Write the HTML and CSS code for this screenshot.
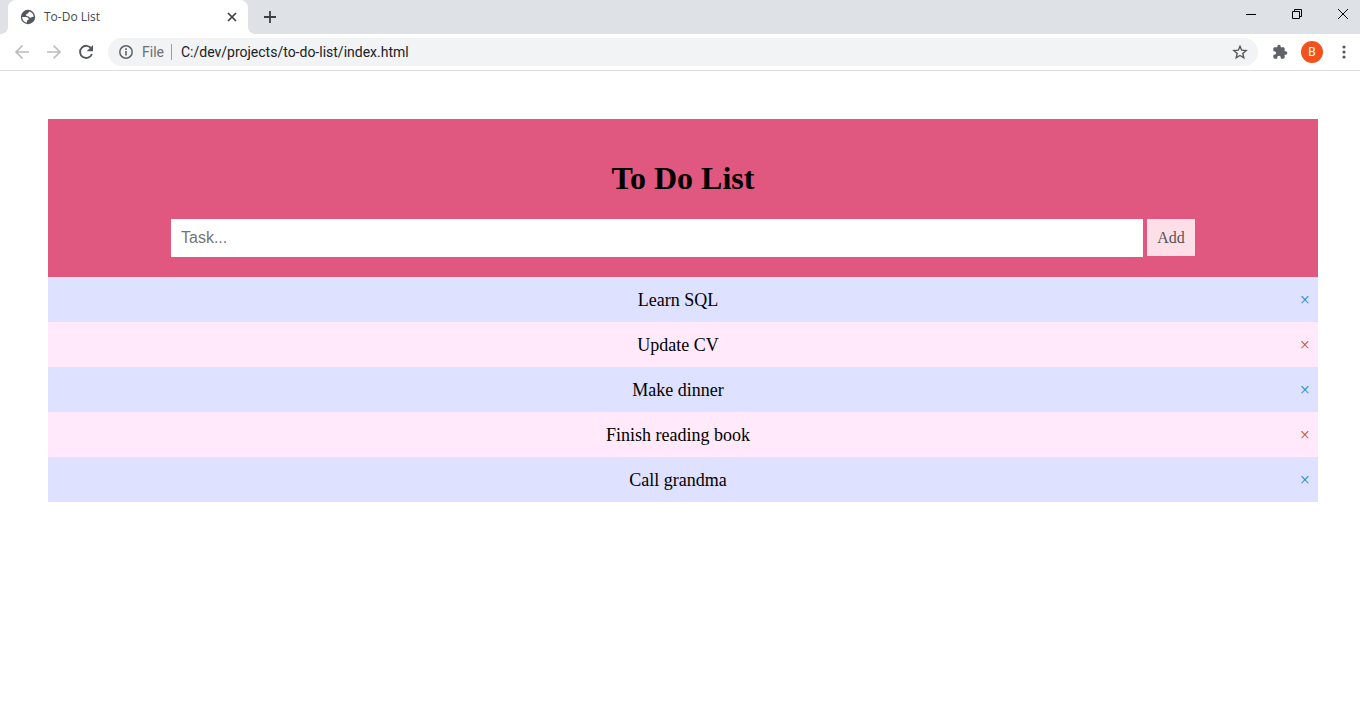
FILE: index.html
```html
<!DOCTYPE html>
<html lang="en">
<head>
<meta charset="utf-8">
<title>To-Do List</title>
<link rel="stylesheet" href="styles.css">
</head>
<body>
<header class="browser">
  <div class="tabstrip">
    <div class="tab">
      <svg class="tab-icon" viewBox="0 0 16 16" aria-hidden="true"><circle cx="8" cy="8" r="7.200" fill="#54585d"/><path d="M9.300 2.400C8.500 3 8.700 3.500 8 4.200 7.200 4.900 6 4.900 6 6c0 1 .9 1.300 2 1.300 1.200 0 1 1.500 2.300 1.500 1.500 0 1.300-1.300 3.400-.9C13.700 5 12 3 9.300 2.400z" fill="#fff"/><path d="M2.200 8h3.600c1.600 0 2.900.7 2.900 2 0 1-.6 1.400-1.700 1.500v2.100C4.200 13.300 2.100 11 2.200 8z" fill="#fff"/></svg>
      <span class="tab-title">To-Do List</span>
      <button class="icon-button tab-close" aria-label="Close tab"><svg width="10" height="10" viewBox="0 0 10 10"><path d="M1 1l8 8M9 1L1 9" stroke="#3c4043" stroke-width="1.700"/></svg></button>
    </div>
    <button class="icon-button new-tab" aria-label="New tab"><svg width="12" height="12" viewBox="0 0 12 12"><path d="M6 0v12M0 6h12" stroke="#3c4043" stroke-width="1.800"/></svg></button>
    <div class="window-controls">
      <button class="icon-button window-button" aria-label="Minimize"><svg width="10" height="10" viewBox="0 0 10 10"><path d="M0 5.500h10" stroke="#000"/></svg></button>
      <button class="icon-button window-button" aria-label="Restore"><svg width="10" height="10" viewBox="0 0 10 10"><path d="M.5 2.500h7v7h-7zM2.500 2.500v-2h7v7h-2" fill="none" stroke="#000"/></svg></button>
      <button class="icon-button window-button window-close" aria-label="Close"><svg width="10" height="10" viewBox="0 0 10 10"><path d="M0 0l10 10M10 0L0 10" stroke="#000"/></svg></button>
    </div>
  </div>
  <div class="toolbar">
    <nav class="nav-buttons">
      <button class="icon-button nav-button" aria-label="Back"><svg width="16" height="16" viewBox="0 0 16 16"><path d="M15 8H2M8.500 1.500L2 8l6.500 6.500" fill="none" stroke="#babcbe" stroke-width="1.700"/></svg></button>
      <button class="icon-button nav-button" aria-label="Forward"><svg width="16" height="16" viewBox="0 0 16 16"><path d="M1 8h13M7.500 1.500L14 8l-6.500 6.500" fill="none" stroke="#babcbe" stroke-width="1.700"/></svg></button>
      <button class="icon-button nav-button" aria-label="Reload"><svg width="16" height="16" viewBox="0 0 16 16"><path d="M13.300 4.600A6.100 6.100 0 1 0 13.900 10" fill="none" stroke="#54585d" stroke-width="1.900"/><path d="M15 1v6.300H8.700z" fill="#54585d"/></svg></button>
    </nav>
    <div class="address-bar">
      <svg class="info-icon" width="14" height="14" viewBox="0 0 14 14" aria-hidden="true"><circle cx="7" cy="7" r="6.200" fill="none" stroke="#5f6368" stroke-width="1.500"/><path d="M7 6v4.500M7 3.300v1.700" stroke="#5f6368" stroke-width="1.600"/></svg>
      <span class="scheme">File</span>
      <input class="url" type="text" aria-label="Address" value="C:/dev/projects/to-do-list/index.html">
      <button class="icon-button" aria-label="Bookmark"><svg width="16" height="16" viewBox="0 0 16 16"><path d="M8 2.200l1.700 4 4.400.4-3.300 2.900 1 4.300L8 11.500l-3.800 2.300 1-4.300-3.300-2.900 4.400-.4z" fill="none" stroke="#54585d" stroke-width="1.400"/></svg></button>
    </div>
    <button class="icon-button extensions" aria-label="Extensions"><svg width="16" height="16" viewBox="0 0 24 24"><path d="M20.500 11H19V7c0-1.100-.9-2-2-2h-4V3.500a2.500 2.500 0 0 0-5 0V5H4c-1.100 0-2 .9-2 2v3.800h1.500a2.700 2.700 0 0 1 0 5.400H2V20c0 1.100.9 2 2 2h3.800v-1.500a2.700 2.700 0 0 1 5.400 0V22H17c1.100 0 2-.9 2-2v-4h1.500a2.500 2.500 0 0 0 0-5z" fill="#5f6368"/></svg></button>
    <button class="icon-button avatar" aria-label="Profile">B</button>
    <button class="icon-button menu" aria-label="Menu"><svg width="4" height="14" viewBox="0 0 4 14"><g fill="#54585d"><circle cx="2" cy="2" r="1.600"/><circle cx="2" cy="7" r="1.600"/><circle cx="2" cy="12" r="1.600"/></g></svg></button>
  </div>
</header>
<main class="page">
  <section class="todo-header">
    <h1 class="todo-title">To Do List</h1>
    <form class="todo-form">
      <input class="task-input" type="text" placeholder="Task..." aria-label="Task">
      <button class="add-button" type="button">Add</button>
    </form>
  </section>
  <ul class="todo-list">
    <li class="todo-item"><span class="task">Learn SQL</span><button class="remove" aria-label="Remove Learn SQL">×</button></li>
    <li class="todo-item"><span class="task">Update CV</span><button class="remove" aria-label="Remove Update CV">×</button></li>
    <li class="todo-item"><span class="task">Make dinner</span><button class="remove" aria-label="Remove Make dinner">×</button></li>
    <li class="todo-item"><span class="task">Finish reading book</span><button class="remove" aria-label="Remove Finish reading book">×</button></li>
    <li class="todo-item"><span class="task">Call grandma</span><button class="remove" aria-label="Remove Call grandma">×</button></li>
  </ul>
</main>
</body>
</html>
```
FILE: styles.css
```css
* { box-sizing: border-box; }

body {
  margin: 0;
  background: #fff;
  color: #000;
  font-family: "Liberation Serif", "Times New Roman", serif;
}

.browser {
  font-family: "Open Sans", "Segoe UI", sans-serif;
  border-bottom: 1px solid #dadce0;
}

.icon-button {
  display: flex;
  align-items: center;
  justify-content: center;
  flex: none;
  padding: 0;
  border: 0;
  background: none;
}

.tabstrip {
  display: flex;
  height: 34px;
  padding-left: 8px;
  background: #dee1e6;
}

.tab {
  position: relative;
  display: flex;
  align-items: center;
  width: 240px;
  padding: 0 11px 0 12px;
  border-radius: 8px 8px 0 0;
  background: #fff;
}

.tab::before,
.tab::after {
  content: "";
  position: absolute;
  bottom: 0;
  width: 8px;
  height: 8px;
}

.tab::before {
  right: 100%;
  background: radial-gradient(circle at 0 0, #dee1e6 8px, #fff 8px);
}

.tab::after {
  left: 100%;
  background: radial-gradient(circle at 100% 0, #dee1e6 8px, #fff 8px);
}

.tab-icon {
  flex: none;
  width: 16px;
  height: 16px;
}

.tab-title {
  flex: 1;
  margin-left: 8px;
  color: #45494d;
  font-size: 12px;
  line-height: 16px;
}

.new-tab {
  width: 28px;
  margin-left: 8px;
}

.window-controls {
  display: flex;
  height: 28px;
  margin-left: auto;
}

.window-button { width: 46px; }

.window-close {
  width: 40px;
  padding-left: 6px;
}

.toolbar {
  display: flex;
  align-items: center;
  height: 36px;
  padding-right: 8px;
  background: #fff;
}

.nav-buttons {
  display: flex;
  padding: 0 6px;
}

.nav-button {
  width: 32px;
  height: 28px;
}

.address-bar {
  display: flex;
  flex: 1;
  align-items: center;
  height: 28px;
  padding: 0 10px 0 11px;
  border-radius: 14px;
  background: #f1f3f4;
  font-family: Roboto, "Segoe UI", sans-serif;
  font-size: 14px;
}

.scheme {
  margin-left: 9px;
  padding-right: 7px;
  border-right: 1px solid #9aa0a6;
  color: #6b6f74;
  line-height: 16px;
}

.url {
  flex: 1;
  min-width: 0;
  padding: 0 0 0 9px;
  border: 0;
  outline: 0;
  background: none;
  color: #202124;
  font: inherit;
}

.extensions { margin-left: 14px; }

.avatar {
  width: 22px;
  height: 22px;
  margin-left: 13px;
  border-radius: 50%;
  background: #f4511e;
  color: #fff;
  font-family: Roboto, sans-serif;
  font-size: 12px;
}

.menu {
  width: 16px;
  height: 28px;
  margin-left: 13px;
}

.page { padding: 48px 42px 48px 48px; }

.todo-header {
  padding: 40px 123px 20px;
  background: #e0587f;
}

.todo-title {
  margin: 0 0 22px;
  font-size: 32px;
  line-height: 38px;
  text-align: center;
}

.todo-form {
  display: flex;
  align-items: flex-start;
  gap: 4px;
}

.task-input {
  flex: 1;
  min-width: 0;
  height: 38px;
  padding: 10px;
  border: 0;
  background: #fff;
  font-family: "Liberation Sans", Arial, sans-serif;
  font-size: 16px;
}

.task-input::placeholder { color: #757575; }

.add-button {
  width: 48px;
  height: 37px;
  padding: 0;
  border: 0;
  background: #ffdfe7;
  color: #555;
  font-family: inherit;
  font-size: 16px;
}

.todo-list {
  margin: 0;
  padding: 0;
  list-style: none;
}

.todo-item {
  display: flex;
  align-items: center;
  padding: 13px 8px 11px 0;
  background: #dee1ff;
  font-size: 18px;
  line-height: 21px;
}

.todo-item:nth-child(even) { background: #ffe9fb; }

.task {
  flex: 1;
  padding-left: 8px;
  text-align: center;
}

.remove {
  padding: 0;
  border: 0;
  background: none;
  color: #2f7fc4;
  font-family: inherit;
  font-size: 18px;
  line-height: 21px;
}

.todo-item:nth-child(even) .remove { color: #b5533c; }
```
